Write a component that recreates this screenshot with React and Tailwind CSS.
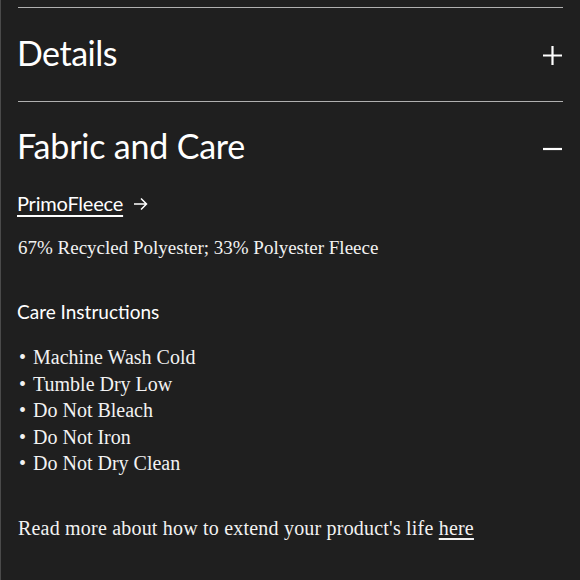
export default function App() {
  const care = ["Machine Wash Cold", "Tumble Dry Low", "Do Not Bleach", "Do Not Iron", "Do Not Dry Clean"]

  return (
    <div className="w-[580px] h-[580px] overflow-hidden bg-[#1f1f1f] border-l border-[#4a4a4a] text-white">
      <div className="mx-[17px] pt-[7px]">
        {/* Details */}
        <div className="border-t border-[#b0b0b0] h-[94px] flex items-center justify-between">
          <h2 className="text-[34px] leading-none font-['Lato',sans-serif] tracking-[-0.5px] pb-[4px] -ml-[1px]">Details</h2>
          <svg width="21" height="21" viewBox="0 0 21 21" className="mt-[2px]">
            <path d="M10.5 1v19M1 10.5h19" stroke="white" strokeWidth="2.2" />
          </svg>
        </div>

        {/* Fabric and Care */}
        <div className="border-t border-[#b0b0b0]">
          <div className="h-[92px] flex items-center justify-between">
            <h2 className="text-[34px] leading-none font-['Lato',sans-serif] tracking-[-0.2px] pb-[4px] -ml-[1px]">Fabric and Care</h2>
            <svg width="21" height="4" viewBox="0 0 21 4" className="mt-[2px]">
              <path d="M1 2h19" stroke="white" strokeWidth="2.2" />
            </svg>
          </div>

          <div className="flex items-center gap-[10px] -mt-[1px] font-['Lato',sans-serif] text-[20px] leading-none">
            <span className="underline underline-offset-[4px] decoration-[1.5px] tracking-[-0.2px] -ml-[1px]">PrimoFleece</span>
            <svg width="15" height="14" viewBox="0 0 15 14" className="mt-[1px]">
              <path d="M1 7h12.5M8 1.5L13.5 7L8 12.5" stroke="white" strokeWidth="1.5" fill="none" />
            </svg>
          </div>

          <p className="mt-[25px] font-['Liberation_Serif',serif] text-[19px] leading-none text-[#f2f2f2]">
            67% Recycled Polyester; 33% Polyester Fleece
          </p>

          <h3 className="mt-[45px] font-['Lato',sans-serif] text-[19px] leading-none -ml-[1px]">Care Instructions</h3>

          <ul className="mt-[23px] font-['Liberation_Serif',serif] text-[20px] leading-[26.6px] text-[#f2f2f2]">
            {care.map(item => (
              <li key={item} className="flex">
                <span className="w-[15px] pl-[1px]">•</span>
                <span>{item}</span>
              </li>
            ))}
          </ul>

          <p className="mt-[41px] font-['Liberation_Serif',serif] text-[20px] leading-none text-[#f2f2f2] tracking-[0.2px]">
            Read more about how to extend your product's life <span className="underline underline-offset-[3px]">here</span>
          </p>
        </div>
      </div>
    </div>
  )
}
